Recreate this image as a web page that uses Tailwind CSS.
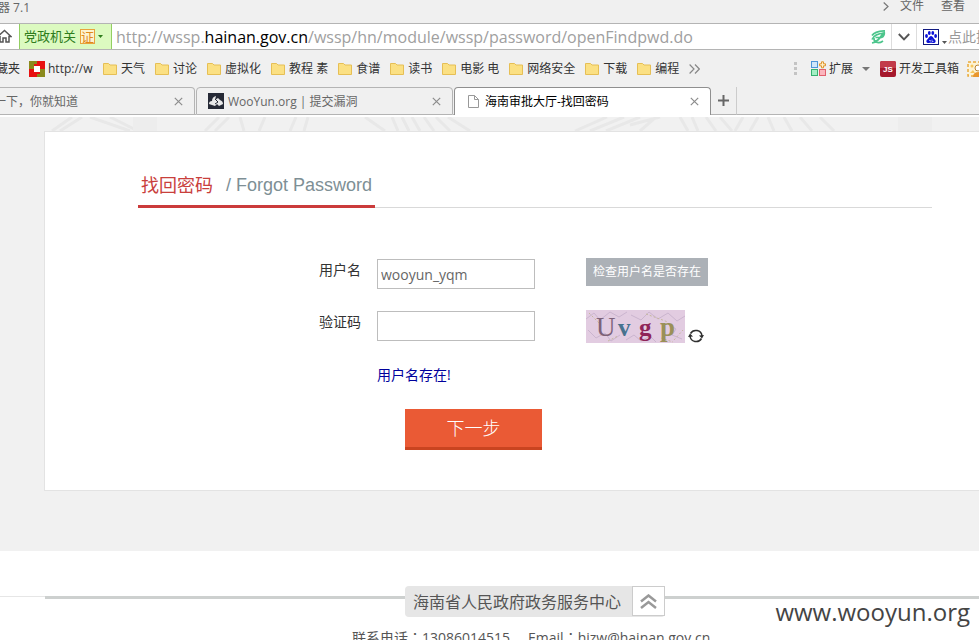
<!DOCTYPE html>
<html lang="zh-CN">
<head>
<meta charset="utf-8">
<title>海南审批大厅-找回密码</title>
<script src="https://cdn.jsdelivr.net/npm/@tailwindcss/browser@4"></script>
</head>
<body class="relative flex h-screen flex-col overflow-hidden bg-[#f0f0f0] font-['Open_Sans','Noto_Sans_CJK_SC',sans-serif] text-xs text-[#333]">
<svg class="hidden">
  <symbol id="folder" viewBox="0 0 14 13"><path d="M.5 12.500V1.500h5l1.500 1.500h6.500v9.500z" fill="#fbe083" stroke="#e6bf55"/></symbol>
  <symbol id="close" viewBox="0 0 9 9"><path d="M.8.8l7.400 7.400M8.200.8L.8 8.200" fill="none" stroke="#8c8c8c" stroke-width="1.200"/></symbol>
</svg>

<header class="shrink-0">
  <div class="flex h-[23px] items-start justify-between overflow-hidden whitespace-nowrap text-[#666]">
    <div class="flex w-[30px] justify-end leading-4">浏览器 7.1</div>
    <nav class="flex items-center pr-[14px] leading-3">
      <svg class="mr-[11px] h-[9px] w-[6px]" viewBox="0 0 6 9"><path d="M.7.5l4.300 4-4.300 4" fill="none" stroke="#777" stroke-width="1.200"/></svg>
      <a href="#" class="mr-[17px]">文件</a>
      <a href="#">查看</a>
    </nav>
  </div>

  <div class="flex h-[27px] items-stretch overflow-hidden whitespace-nowrap border-y border-[#b4b4b4] bg-white">
    <button class="flex w-[19px] items-center" aria-label="主页">
      <svg class="h-[15px] w-[12px]" viewBox="0 0 12 15"><path d="M-3 8L4.500 1.500 11 7.500H9V13H6V9H3v4H0V7" fill="none" stroke="#555" stroke-width="1.500"/></svg>
    </button>
    <button class="flex w-[93px] items-center border-x border-[#93cf62] bg-[#dcfac0] pl-1 text-[13px] text-[#2f7d1c]">
      党政机关
      <span class="ml-1 flex size-[15px] items-center justify-center border border-[#e9a33c] bg-[#fdf3cf] text-[13px] leading-3 text-[#e08a1c]">证</span>
      <svg class="ml-[3px] h-[3px] w-[5px]" viewBox="0 0 5 3"><path d="M0 0h5L2.500 3z" fill="#2f7d1c"/></svg>
    </button>
    <div class="flex flex-1 items-center pl-1 text-base text-[#a0a0a0]"><span>http://wssp.<span class="text-black">hainan.gov.cn</span>/wssp/hn/module/wssp/password/openFindpwd.do</span></div>
    <svg class="mr-[5px] h-[14px] w-[15px] self-center" viewBox="0 0 15 14"><g fill="none" stroke="#4cc58c" stroke-width="1.700"><path d="M1 5.500C3 2.500 7 1 14 .8M1 9.500C3 5 8 3.500 13 3.200"/><path d="M13 1.500c.8 2 0 5-2.500 6H4.500M3 8c-.5 4 4 6.500 9 3M1 13C6 12 10 7 12 3"/></g></svg>
    <button class="flex w-[26px] items-center justify-center border-x border-[#ddd]" aria-label="展开">
      <svg class="h-[8px] w-[12px]" viewBox="0 0 12 8"><path d="M.8 1L6 6.300 11.200 1" fill="none" stroke="#555" stroke-width="1.900"/></svg>
    </button>
    <button class="flex w-[31px] items-center pl-[6px]" aria-label="百度">
      <svg class="size-[16px]" viewBox="0 0 16 16"><rect x=".5" y=".5" width="15" height="15" fill="#fff" stroke="#111a80"/><g fill="#0c12d8"><ellipse cx="3.500" cy="7" rx="1.400" ry="1.900"/><ellipse cx="6.300" cy="4" rx="1.400" ry="2"/><ellipse cx="9.800" cy="4" rx="1.400" ry="2"/><ellipse cx="12.600" cy="7" rx="1.400" ry="1.900"/><path d="M8 7c2 0 2.500 2.500 4 3.800 1.500 1.700 0 3.700-2 3.200-1.300-.3-2.700-.3-4 0-2 .5-3.500-1.500-2-3.200C5.500 9.500 6 7 8 7z"/></g><path d="M6 11.500h1.500v1M9 10.500v2h1.500" fill="none" stroke="#fff" stroke-width=".6"/></svg>
      <svg class="ml-[3px] mt-[11px] h-[3px] w-[5px]" viewBox="0 0 5 3"><path d="M0 0h5L2.500 3z" fill="#555"/></svg>
    </button>
    <div class="flex w-[31px] items-center overflow-hidden text-sm text-[#999]">点此搜索</div>
  </div>

  <nav class="flex h-[37px] items-center overflow-hidden whitespace-nowrap">
    <div class="flex w-[20px] shrink-0 justify-end overflow-hidden">收藏夹</div>
    <a href="#" class="ml-[9px] flex w-[64px] shrink-0 items-center gap-[3px]">
      <svg class="size-4 shrink-0" viewBox="0 0 16 16"><path d="M0 0h16v16H0z" fill="#e81010"/><path d="M0 0h8v3H5v5H0zM8 13h3v-5h5v8H8z" fill="#8b8a1c"/><rect x="5" y="5" width="6" height="6" fill="#fff"/></svg>http://w</a>
    <div class="ml-[10px] flex items-center gap-[10px]">
      <a href="#" class="flex items-center gap-1"><svg class="h-[13px] w-[14px]"><use href="#folder"/></svg>天气</a>
      <a href="#" class="flex items-center gap-1"><svg class="h-[13px] w-[14px]"><use href="#folder"/></svg>讨论</a>
      <a href="#" class="flex items-center gap-1"><svg class="h-[13px] w-[14px]"><use href="#folder"/></svg>虚拟化</a>
      <a href="#" class="flex items-center gap-1"><svg class="h-[13px] w-[14px]"><use href="#folder"/></svg>教程 素</a>
      <a href="#" class="flex items-center gap-1"><svg class="h-[13px] w-[14px]"><use href="#folder"/></svg>食谱</a>
      <a href="#" class="flex items-center gap-1"><svg class="h-[13px] w-[14px]"><use href="#folder"/></svg>读书</a>
      <a href="#" class="flex items-center gap-1"><svg class="h-[13px] w-[14px]"><use href="#folder"/></svg>电影 电</a>
      <a href="#" class="flex items-center gap-1"><svg class="h-[13px] w-[14px]"><use href="#folder"/></svg>网络安全</a>
      <a href="#" class="flex items-center gap-1"><svg class="h-[13px] w-[14px]"><use href="#folder"/></svg>下载</a>
      <a href="#" class="flex items-center gap-1"><svg class="h-[13px] w-[14px]"><use href="#folder"/></svg>编程</a>
      <svg class="h-[10px] w-[11px]" viewBox="0 0 11 10"><path d="M.6.500L5 5 .6 9.500M6 .5L10.300 5 6 9.500" fill="none" stroke="#888" stroke-width="1.200"/></svg>
    </div>
    <div class="ml-auto flex items-center">
      <svg class="mr-[14px] h-[13px] w-[3px]" viewBox="0 0 3 13"><path d="M0 0h3v3H0zM0 5h3v3H0zM0 10h3v3H0z" fill="#c4c4c4"/></svg>
      <svg class="mr-[3px] size-[15px]" viewBox="0 0 15 15"><rect x=".5" y=".5" width="6" height="6" fill="#cfe6fa" stroke="#4d95d9"/><rect x=".5" y="8.500" width="6" height="6" fill="#a4eec4" stroke="#35b070"/><rect x="8.500" y="8.500" width="6" height="6" fill="#fbb5bd" stroke="#e0606e"/><path d="M10.500 .8h2v2h2v2h-2v2h-2v-2h-2v-2h2z" fill="#fff0c8" stroke="#e0952c"/></svg>
      <a href="#">扩展</a>
      <svg class="ml-[9px] mr-[10px] h-[4px] w-[8px]" viewBox="0 0 8 4"><path d="M0 0h8L4 4z" fill="#777"/></svg>
      <svg class="mr-[3px] size-4" viewBox="0 0 16 16"><rect width="16" height="16" rx="2" fill="#a5182c"/><path d="M2 0h12q2 0 2 2v5H0V2q0-2 2-2z" fill="#c23a4a"/><text x="8" y="11" text-anchor="middle" font-family="Liberation Sans" font-weight="bold" font-size="8" fill="#fff">JS</text></svg>
      <a href="#">开发工具箱</a>
      <svg class="ml-[8px] h-[16px] w-[12px]" viewBox="0 0 12 16"><rect x="1" y="1" width="16" height="14" fill="#fdf3d4" stroke="#e9ab3c" stroke-width="1.500" stroke-dasharray="3 2"/><circle cx="5" cy="5" r="1.500" fill="#f6c75d"/><path d="M3 12l3-3 2 3z" fill="#f6c75d"/><circle cx="11" cy="7" r="3" fill="#fff" stroke="#b98433"/><path d="M6 16q0-5 6-5v5z" fill="#e9962c"/></svg>
    </div>
  </nav>

  <div class="flex h-[28px] items-end whitespace-nowrap text-[#666]">
    <div class="flex h-[28px] w-[195px] items-center rounded-tr border border-l-0 border-[#b4b4b4]">
      <div class="flex w-[78px] justify-end overflow-hidden pt-px">百度一下，你就知道</div>
      <button class="ml-auto mr-[11px]" aria-label="关闭"><svg class="size-[9px]"><use href="#close"/></svg></button>
    </div>
    <div class="w-px self-stretch border-b border-[#b4b4b4]"></div>
    <div class="flex h-[28px] w-[257px] items-center rounded-t border border-[#b4b4b4] pl-[11px]">
      <svg class="mr-1 size-4" viewBox="0 0 16 16"><rect width="16" height="16" fill="#262a36"/><path d="M1 11q0-3 3-3 0-4 4-5l-1 4 3-2 2 2q3 1 3 4l-4 2-2-2-2 2z" fill="#e8e8e8"/><path d="M7 6l3 3-3 2" fill="none" stroke="#262a36"/></svg>
      <span class="pt-px">WooYun.org | 提交漏洞</span>
      <button class="ml-auto mr-[11px]" aria-label="关闭"><svg class="size-[9px]"><use href="#close"/></svg></button>
    </div>
    <div class="w-px self-stretch border-b border-[#b4b4b4]"></div>
    <div class="flex h-[28px] w-[257px] items-center rounded-t border border-b-0 border-[#8f8f8f] bg-white pl-[13px] text-black">
      <svg class="mr-[6px] h-[13px] w-[11px]" viewBox="0 0 11 13"><path d="M.5.500h6l4 4v8H.500zM6.500.500v4h4" fill="#fff" stroke="#999"/></svg>
      海南审批大厅-找回密码
      <button class="ml-auto mr-[11px]" aria-label="关闭"><svg class="size-[9px]"><use href="#close"/></svg></button>
    </div>
    <button class="flex w-[26px] items-center justify-center self-stretch border-b border-r border-b-[#b4b4b4] border-r-[#ccc]" aria-label="新标签页">
      <svg class="size-[11px]" viewBox="0 0 11 11"><path d="M5.500 0v11M0 5.500h11" stroke="#666" stroke-width="2"/></svg>
    </button>
    <div class="flex-1 self-stretch border-b border-[#b4b4b4]"></div>
  </div>
  <div class="h-[2px] bg-white"></div>
</header>

<main class="shrink-0 bg-[#f1f1f1] pb-[60px]">
  <svg class="h-[14px] w-full" viewBox="0 0 979 14" preserveAspectRatio="xMinYMin slice" fill="none" stroke="#e8e8e8" stroke-width="3">
    <path d="M52 14l20-14M60 14l22-14M90 0l40 14M110 0l24 12M205 14l14-14M215 14l14-14M240 0l4 14M265 0l-6 14M290 14l6-14M308 0l-4 14M365 0l20 14M392 0l6 14M402 0l7 14M412 0l8 14M424 0l10 14M436 0l14 14M448 0l22 14M575 14l32-14M590 14l34-14M606 14l34-14M630 8l30-8M640 14l16-14M680 0l8 14M692 0l6 14M706 0l10 14M720 0l12 14M735 14l8-14M750 14l8-14M768 0l6 14M784 0l8 14M800 0l12 14M820 0l14 14"/>
    <path d="M133 0h24v14h-24zM898 0h34v14h-34z" fill="#ededed" stroke="none"/>
  </svg>
  <section class="ml-[44px] border-y border-l border-[#e3e3e3] bg-white pb-[40px] pl-[93px] pr-[47px]">
    <div class="flex h-[76px] items-end border-b border-[#d9d9d9]">
      <h1 class="-mb-px flex h-[40px] w-[237px] items-start whitespace-nowrap border-b-3 border-[#cb3b3b] pl-[3px] text-lg leading-[34px] text-[#c9403c]">找回密码<span class="ml-[13px] font-['Liberation_Sans',sans-serif] text-[#7e8f95]">/ Forgot Password</span></h1>
    </div>
    <form class="pt-[50px]" onsubmit="return false">
      <div class="grid grid-cols-[223px_158px_1fr] gap-x-4 text-sm">
        <label for="user" class="h-[52px] text-right leading-6">用户名</label>
        <input id="user" type="text" value="wooyun_yqm" class="mt-px h-[30px] border border-[#bdbdbd] bg-white px-[3px] text-sm text-[#666] outline-none">
        <div class="pl-[35px]"><button type="button" class="block h-7 bg-[#acb1b7] px-[7px] text-xs text-white">检查用户名是否存在</button></div>
        <label for="code" class="h-[52px] text-right leading-6">验证码</label>
        <input id="code" type="text" class="mt-px h-[30px] border border-[#bdbdbd] bg-white px-[3px] text-sm outline-none">
        <div class="flex items-start gap-[3px] pl-[35px]">
          <svg class="h-[33px] w-[99px]" viewBox="0 0 99 33" font-family="Liberation Serif">
            <rect width="99" height="33" fill="#e2cce1"/>
            <path d="M0 9l8-6 6 7 10-8 9 5 8-5M2 20l8 8 9-5 6 8 9-6M40 30l8-5 7 6 9-5 6 6M45 5l10 5 8-8 9 7 10-6 9 8 8-5M82 14l8 5-4 6 10 4" fill="none" stroke="#cbb5cf"/>
            <path d="M3 3l12 12M22 31l10-5M60 4l22 8M88 30l9-10M75 28l12 4" stroke="#c5b89d" stroke-dasharray="2 2"/>
            <text x="10" y="26" font-size="27" fill="#7d6278">U</text>
            <text x="32" y="26" font-size="25" font-weight="bold" fill="#47728f">v</text>
            <text x="53" y="26" font-size="25" font-weight="bold" fill="#8f2458">g</text>
            <text x="74" y="26" font-size="27" font-weight="bold" fill="#9a9058">p</text>
          </svg>
          <button type="button" class="mt-[18px]" aria-label="换一张"><svg class="size-4" viewBox="0 0 16 16"><g fill="none" stroke="#2f2f2f" stroke-width="1.500"><path d="M2.500 5.500A6.200 6.200 0 0 1 14 8M13.500 10.500A6.200 6.200 0 0 1 2 8"/></g><path d="M0 9l2-3.500L5 8.500zM16 7l-2 3.500L11 7.500z" fill="#2f2f2f"/></svg></button>
        </div>
      </div>
      <p class="ml-[239px] pb-[22px] pt-px text-sm leading-6 text-[#00009c]">用户名存在!</p>
      <button type="submit" class="ml-[267px] block h-[41px] w-[137px] border-b-3 border-[#c94420] bg-[#ea5a35] text-lg font-light leading-[38px] text-white">下一步</button>
    </form>
  </section>
</main>

<footer class="flex-1 bg-white pt-[35px] text-[#555]">
  <div class="flex items-start">
    <div class="mt-[10px] h-px w-[45px] bg-[#e6e6e6]"></div>
    <div class="mt-[10px] h-[3px] w-[360px] bg-[#cdd0cf]"></div>
    <div class="flex h-[31px] items-start whitespace-nowrap rounded-sm bg-[#e6e6e6] text-base leading-8">
      <span class="pl-2 pr-[11px]">海南省人民政府政务服务中心</span>
      <a href="#" aria-label="返回顶部" class="flex h-[30px] w-[33px] items-center justify-center border border-[#ccc] bg-white"><svg class="h-[15px] w-[17px]" viewBox="0 0 17 15"><path d="M1 7.500L8.500 1.500 16 7.500M1 14L8.500 8 16 14" fill="none" stroke="#999" stroke-width="2.500"/></svg></a>
    </div>
    <div class="mt-[10px] h-[3px] flex-1 bg-[#cdd0cf]"></div>
  </div>
  <p class="ml-[352px] mt-[10px] whitespace-nowrap text-sm">联系电话<span lang="zh-TW" class="font-['Noto_Sans_CJK_TC',sans-serif]">：</span>13086014515<span class="ml-[18px]">Email<span lang="zh-TW" class="font-['Noto_Sans_CJK_TC',sans-serif]">：</span>hjzw@hainan.gov.cn</span></p>
</footer>
<div class="absolute bottom-[12px] right-[9px] text-2xl leading-8 text-[#444]">www.wooyun.org</div>
</body>
</html>
